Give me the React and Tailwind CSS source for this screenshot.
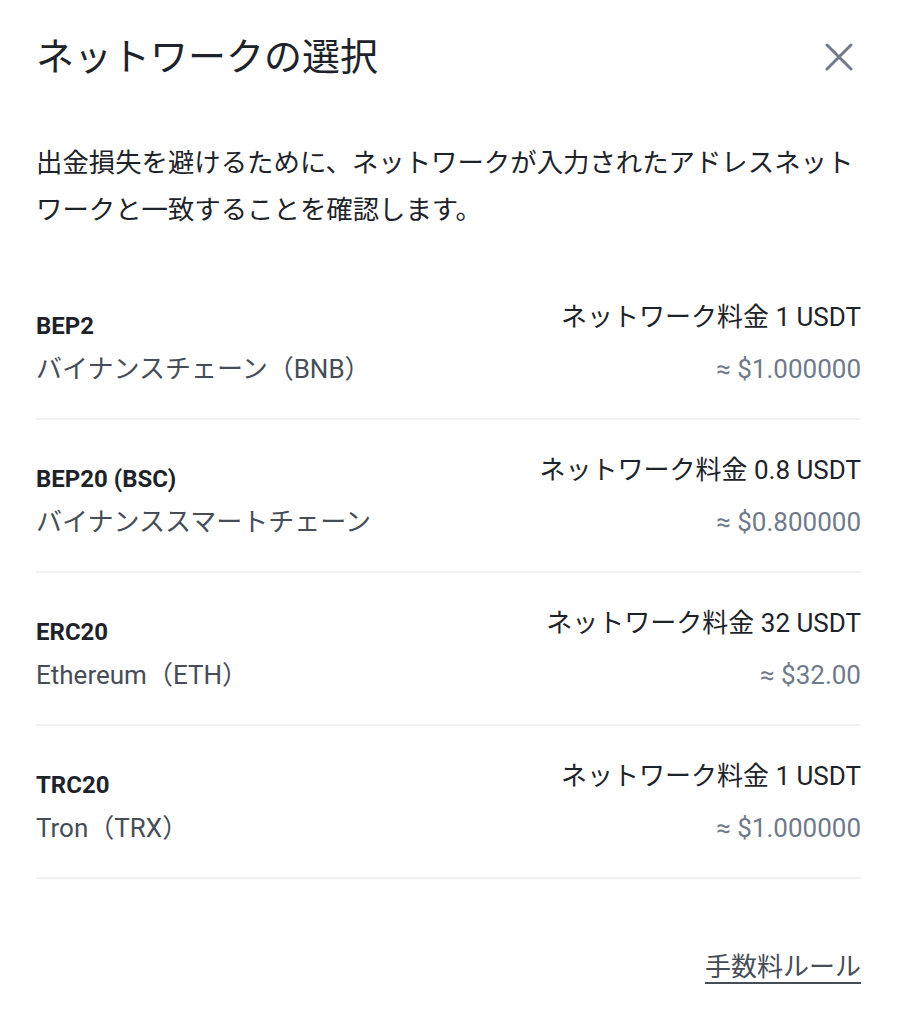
const NETWORKS = [
  { code: 'BEP2', name: 'バイナンスチェーン（BNB）', fee: '1 USDT', usd: '≈ $1.000000' },
  { code: 'BEP20 (BSC)', name: 'バイナンススマートチェーン', fee: '0.8 USDT', usd: '≈ $0.800000' },
  { code: 'ERC20', name: 'Ethereum（ETH）', fee: '32 USDT', usd: '≈ $32.00' },
  { code: 'TRC20', name: 'Tron（TRX）', fee: '1 USDT', usd: '≈ $1.000000' },
]

function App() {
  return (
    <main
      className="min-h-screen bg-white pl-[36px] pr-[42px] pt-[33px]"
      style={{ fontFamily: "Roboto, 'Noto Sans CJK JP', sans-serif" }}
    >
      <div className="flex items-center justify-between h-12">
        <h1 className="text-[38px] leading-[48px] text-[#1e2329]">ネットワークの選択</h1>
        <button className="mr-[8px] text-[#707a8a]">
          <svg width="28" height="28" viewBox="0 0 28 28" fill="none" stroke="currentColor" strokeWidth="3" strokeLinecap="round">
            <path d="M2 2L26 26M26 2L2 26" />
          </svg>
        </button>
      </div>

      <p className="mt-[59px] text-[26.4px] leading-[47px] text-[#1e2329]">
        出金損失を避けるために、ネットワークが入力されたアドレスネットワークと一致することを確認します。
      </p>

      <div className="mt-[33px]">
        {NETWORKS.map((n) => (
          <div
            key={n.code}
            className="flex items-end justify-between pt-[32px] pb-[31px] border-b-2 border-[#f0f1f3]"
          >
            <div className="flex flex-col gap-[7px]">
              <span className="text-[24px] leading-[36px] font-bold text-[#1e2329]">{n.code}</span>
              <span className="text-[26px] leading-[36px] text-[#474d57]">{n.name}</span>
            </div>
            <div className="flex flex-col items-end gap-[16px]">
              <span className="text-[26px] leading-[36px] text-[#1e2329]">ネットワーク料金 {n.fee}</span>
              <span className="text-[26px] leading-[36px] text-[#707a8a]">{n.usd}</span>
            </div>
          </div>
        ))}
      </div>

      <div className="mt-[70px] flex justify-end">
        <a href="#" className="text-[26px] leading-[36px] text-[#474d57] underline underline-offset-[6px]">
          手数料ルール
        </a>
      </div>
    </main>
  )
}

export default App
